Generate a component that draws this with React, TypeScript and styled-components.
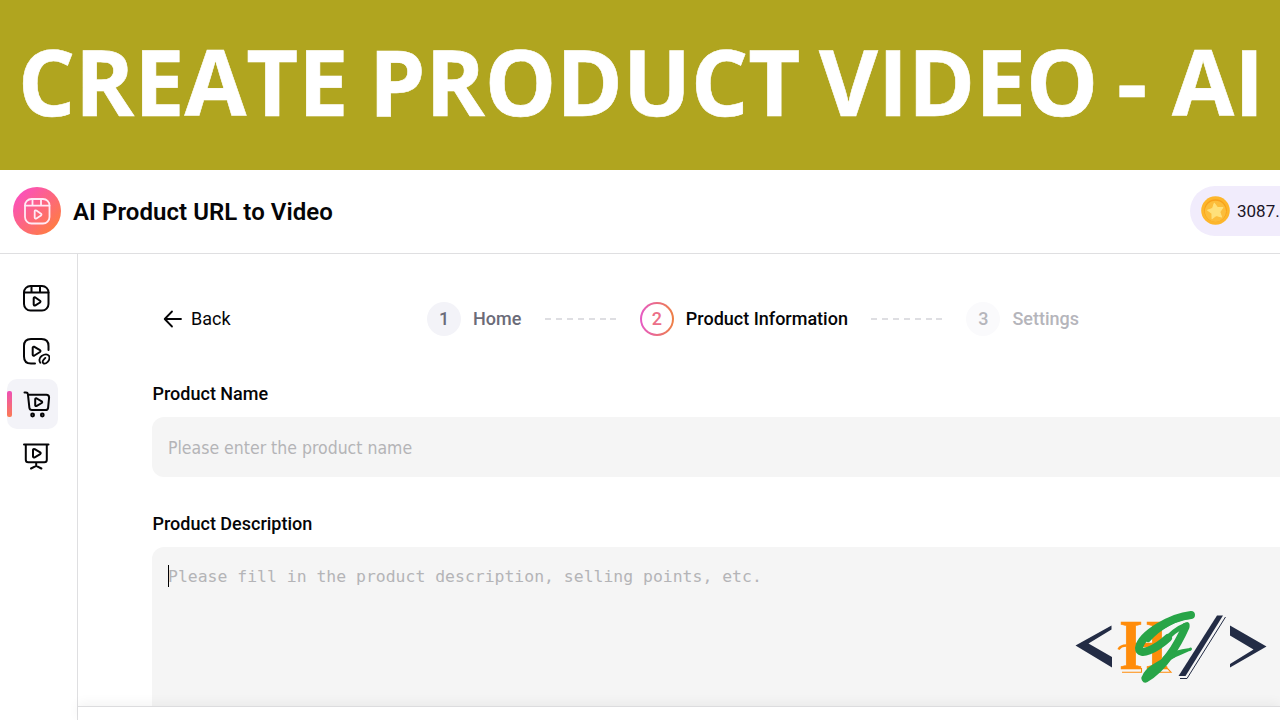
import React from "react";
import styled, { createGlobalStyle } from "styled-components";

const GlobalStyle = createGlobalStyle`
  * { box-sizing: border-box; }
  body { margin: 0; background: #fff; overflow: hidden; font-family: Roboto, "Liberation Sans", sans-serif; }
`;

const Page = styled.div`
  width: 1280px;
  height: 720px;
  overflow: hidden;
  display: flex;
  flex-direction: column;
  position: relative;
  color: #050507;
`;

const Banner = styled.h1`
  margin: 0;
  height: 170px;
  flex: none;
  display: flex;
  padding: 16px 0 0 18px;
  background: #b0a51f;
  color: #fff;
  font: 700 91px/130px "Open Sans", "Noto Sans", sans-serif;
  -webkit-text-stroke: 0.6px #fff;
  white-space: nowrap;
`;

const Word = styled.span<{ $width: number; $scale: number }>`
  flex: none;
  width: ${(p) => p.$width}px;
  transform: scaleX(${(p) => p.$scale});
  transform-origin: 0 50%;
`;

const Header = styled.header`
  height: 84px;
  flex: none;
  display: flex;
  align-items: center;
  justify-content: space-between;
  padding: 0 0 2px 13px;
  border-bottom: 1px solid #dfdfe1;
`;

const Brand = styled.div`
  display: flex;
  align-items: center;
  gap: 12px;
`;

const BrandBadge = styled.div`
  width: 48px;
  height: 48px;
  border-radius: 50%;
  display: flex;
  align-items: center;
  padding-left: 10px;
  color: #ffeaf5;
  background: linear-gradient(135deg, #fb4fc0 10%, #ff7e3f 90%);
`;

const BrandName = styled.div`
  font-size: 24px;
  font-weight: 600;
  line-height: 32px;
  padding-top: 2px;
  letter-spacing: 0.05px;
`;

const Credits = styled.div`
  width: 90px;
  height: 50px;
  padding-left: 11px;
  display: flex;
  align-items: center;
  gap: 7px;
  border-radius: 25px 0 0 25px;
  background: #f1ecfc;
  font-size: 17px;
  color: #1a1426;
  white-space: nowrap;
  overflow: hidden;

  svg { flex: none; }
`;

const Body = styled.div`
  flex: 1;
  min-height: 0;
  display: flex;
`;

const Sidebar = styled.nav`
  width: 78px;
  flex: none;
  border-right: 1px solid #dfdfe1;
  padding: 19px 0 0 7px;
  display: flex;
  flex-direction: column;
  gap: 2.7px;
`;

const NavItem = styled.div<{ $active?: boolean }>`
  width: 51px;
  height: 50px;
  border-radius: 10px;
  display: flex;
  align-items: center;
  padding-left: ${(p) => (p.$active ? 0 : 15)}px;
  gap: 10.5px;
  background: ${(p) => (p.$active ? "#f3f3f8" : "transparent")};

  &:nth-child(3) { margin: 0.8px 0 -0.8px; }
`;

const ActiveBar = styled.i`
  width: 5px;
  height: 26px;
  border-radius: 2px;
  background: linear-gradient(#ee50b6, #fb7b54);
`;

const Main = styled.main`
  flex: 1;
  min-width: 0;
  display: flex;
  flex-direction: column;
`;

const Content = styled.div`
  flex: 1;
  min-height: 0;
  overflow: hidden;
  padding-left: 74px;
`;

const Footer = styled.div`
  flex: none;
  height: 14px;
  border-top: 1px solid #dcdcde;
  background: #fff;
  box-shadow: 0 -3px 12px rgba(0, 0, 0, 0.05);
`;

const TopRow = styled.div`
  height: 34px;
  margin-top: 48px;
  display: flex;
  align-items: center;
  padding-left: 11px;
  font-size: 18px;
`;

const Caption = styled.span`
  padding-bottom: 2px;
`;

const Back = styled.div`
  width: 264px;
  display: flex;
  align-items: center;
  gap: 8px;
`;

const Step = styled.div<{ $color: string }>`
  display: flex;
  align-items: center;
  gap: 12px;
  font-weight: 500;
  color: ${(p) => p.$color};
`;

const StepNumber = styled.span<{ $bg: string; $color: string }>`
  width: 34px;
  height: 34px;
  border-radius: 50%;
  border: 2.5px solid transparent;
  padding-bottom: 2px;
  display: grid;
  place-items: center;
  color: ${(p) => p.$color};
  background: ${(p) => p.$bg};
`;

const Dashes = styled.span`
  width: 72px;
  height: 2px;
  margin: 0 23px 0 23.5px;
  background: repeating-linear-gradient(90deg, #dedee2 0 6px, transparent 6px 10.9px);
`;

const Label = styled.div<{ $top: number }>`
  margin-top: ${(p) => p.$top}px;
  padding-left: 0.5px;
  font-size: 18px;
  line-height: 26px;
  font-weight: 500;
`;

const Field = styled.div<{ $height: number; $mono?: boolean }>`
  height: ${(p) => p.$height}px;
  margin-top: 10px;
  padding: 18px 0 0 16px;
  border-radius: 12px 0 0 12px;
  background: #f5f5f5;
  color: #b4b4b7;
  font: ${(p) => (p.$mono ? '16.44px/24px "DejaVu Sans Mono", monospace' : '17.5px/26px "DejaVu Sans Condensed", "DejaVu Sans", sans-serif')};
  white-space: nowrap;
`;

const Caret = styled.i`
  display: inline-block;
  width: 1px;
  height: 22px;
  margin-right: -1px;
  vertical-align: -5px;
  background: #000;
`;

const Watermark = styled.div`
  position: absolute;
  left: 1070px;
  top: 604px;
  width: 200px;
  height: 86px;
`;

const Icon = ({ children, size = 28 }: { children: React.ReactNode; size?: number }) => (
  <svg width={size} height={size} viewBox="0 0 28 28" fill="none" stroke="currentColor" strokeWidth="2" strokeLinecap="round" strokeLinejoin="round">
    {children}
  </svg>
);

const ReelIcon = ({ size, thin }: { size?: number; thin?: boolean }) => (
  <Icon size={size}>
    <g strokeWidth={thin ? 1.8 : 2}>
      <rect x="2" y="2" width="24.5" height="24.5" rx="6.5" />
      <path d="M2 8.6h24.5M9.5 2v6.6M18 2v6.6" />
      <path d="M11.7 14.2v6.4q.3 1.4 1.7.8l4.6-2.9q1-.9 0-1.8l-4.6-3.2q-1.5-.6-1.7.7Z" />
    </g>
  </Icon>
);

const LinkedReelIcon = () => (
  <Icon>
    <path d="M13 26.4H9Q2 26.4 2 19.4V9Q2 2 9 2h10.500Q26.500 2 26.500 9v4" />
    <path d="M10.700 10.700v7q.3 1.400 1.700.8l5.600-3.500q1-.9 0-1.800l-5.600-3.400q-1.500-.5-1.700.9Z" />
    <path strokeWidth="1.800" d="M18.300 25.800Q16 21.800 19.600 19Q24.500 15.900 27 18.900Q28.400 22 25.700 24.800Q22.900 27.700 21.100 26Q20 24.500 21.700 22.600L23.300 20.900" />
  </Icon>
);

const CartIcon = () => (
  <Icon>
    <path d="M1.500 2.500h1.500q1.700 0 1.900 1.600L6.400 17.800q.3 2.200 2.600 2.200h13.500q2.400 0 2.600-2.200l1-10.300Q26 4.700 23.400 4.700H5.200" />
    <path d="M12.200 9.200v6q.3 1.300 1.600.7l4.900-2.900q1-.8 0-1.600l-4.900-2.900q-1.400-.5-1.600.7Z" />
    <circle cx="9.600" cy="25" r="1.400" />
    <circle cx="19.300" cy="25" r="1.400" />
  </Icon>
);

const BoardIcon = () => (
  <Icon>
    <path d="M2 2.400H26.500M3.800 2.400v15.400q0 2.500 2.500 2.500h16q2.500 0 2.500-2.500V2.400M14.200 20.300v3.500M9 26.500l5.200-2.700 5.200 2.700" />
    <path d="M11 8v6.500q.3 1.400 1.700.8l5.500-3.200q1-.9 0-1.700L12.700 7.200q-1.500-.5-1.700.8Z" />
  </Icon>
);

const Coin = () => (
  <svg width="29" height="29" viewBox="0 0 29 29">
    <circle cx="14.500" cy="14.500" r="14.300" fill="#fdb62b" />
    <circle cx="14.500" cy="14.500" r="11.300" fill="#f7a01c" />
    <circle cx="14.500" cy="15.300" r="10.600" fill="#fcbd3b" />
    <path transform="rotate(-10 14.5 14.5)" d="M14.500 7.200l2.500 4.700 5.300.9-3.800 3.800.8 5.300-4.800-2.400-4.800 2.400.8-5.300-3.800-3.800 5.300-.9Z" fill="#ffe07a" stroke="#ffe07a" strokeLinejoin="round" />
  </svg>
);

const CodeLogo = () => (
  <svg width="200" height="86" viewBox="1070 604 200 86">
    <path fill="#232c45" d="M1075.500 645.500 1111.500 625.500V629.500L1088.500 643.500 1112 657V667.500Z" />
    <path fill="#232c45" d="M1230 625.500 1266.500 646.500 1230 667.500V664L1253.500 649.500 1230 635.500Z" />
    <text x="1120" y="669" fontFamily="Liberation Serif" fontWeight="700" fontSize="71" textLength="48" lengthAdjust="spacingAndGlyphs" fill="#ff8c0a" stroke="#ff8c0a" strokeWidth=".6">H</text>
    <path d="M1118.500 649.500q2-4 8-4" fill="none" stroke="#ff8c0a" strokeWidth="2.400" />
    <path d="M1122 672.200H1141.500V668M1153 672.200H1171L1166 667" fill="none" stroke="#ff8c0a" strokeWidth="1.100" />
    <g fill="none" stroke="#28a548" strokeLinecap="round" strokeLinejoin="round">
      <path strokeWidth="8" d="M1191 615C1172 617 1141 634 1139 648C1139 657 1156 649 1168 638" />
      <path strokeWidth="5" d="M1163 643Q1173 630 1187 624.500" />
      <path strokeWidth="6" d="M1190 616C1178 616 1158 627 1148 639" />
      <path strokeWidth="8" d="M1185.500 627C1178 644 1164 668 1145.500 678.500" />
      <path strokeWidth="5" d="M1145 676C1148 668 1164 661 1174 655" />
      <path strokeWidth="3" d="M1166 659Q1178 655 1190.500 649M1164 658Q1174 651 1190 649.500" />
    </g>
    <path fill="#232c45" d="M1217 615.500h6L1185.500 676H1178.500Z" />
    <path fill="none" stroke="#232c45" strokeWidth="1" d="M1225.500 617 1187 678.500H1180" />
  </svg>
);

const gradientRing = "linear-gradient(#fff, #fff) padding-box, linear-gradient(90deg, #e65ac6, #ee8043) border-box";

export default function App() {
  return (
    <Page>
      <GlobalStyle />
      <Banner>
        <Word $width={351} $scale={0.985}>CREATE</Word>
        <Word $width={450} $scale={0.988}>PRODUCT</Word>
        <Word $width={298} $scale={0.997}>VIDEO</Word>
        <Word $width={55} $scale={1.03}>-</Word>
        <Word $width={90} $scale={0.99}>AI</Word>
      </Banner>
      <Header>
        <Brand>
          <BrandBadge><ReelIcon thin /></BrandBadge>
          <BrandName>AI Product URL to Video</BrandName>
        </Brand>
        <Credits><Coin />3087.</Credits>
      </Header>
      <Body>
        <Sidebar>
          <NavItem><ReelIcon /></NavItem>
          <NavItem><LinkedReelIcon /></NavItem>
          <NavItem $active><ActiveBar /><CartIcon /></NavItem>
          <NavItem><BoardIcon /></NavItem>
        </Sidebar>
        <Main>
          <Content>
            <TopRow>
              <Back>
                <svg width="20" height="18" viewBox="0 0 20 18" fill="none" stroke="currentColor" strokeWidth="1.800" strokeLinecap="round" strokeLinejoin="round">
                  <path d="M18 9H2M9 1.500 1.700 9 9 16.500" />
                </svg>
                <Caption>Back</Caption>
              </Back>
              <Step $color="#6b6b78"><StepNumber $bg="#f3f3f8" $color="#6b6b78">1</StepNumber><Caption>Home</Caption></Step>
              <Dashes />
              <Step $color="#050507"><StepNumber $bg={gradientRing} $color="#ec6f88">2</StepNumber><Caption>Product Information</Caption></Step>
              <Dashes />
              <Step $color="#b5b5bb"><StepNumber $bg="#fafafc" $color="#b5b5bb">3</StepNumber><Caption>Settings</Caption></Step>
            </TopRow>
            <Label $top={45}>Product Name</Label>
            <Field $height={60}>Please enter the product name</Field>
            <Label $top={34}>Product Description</Label>
            <Field $height={200} $mono><Caret />Please fill in the product description, selling points, etc.</Field>
          </Content>
          <Footer />
        </Main>
      </Body>
      <Watermark><CodeLogo /></Watermark>
    </Page>
  );
}
